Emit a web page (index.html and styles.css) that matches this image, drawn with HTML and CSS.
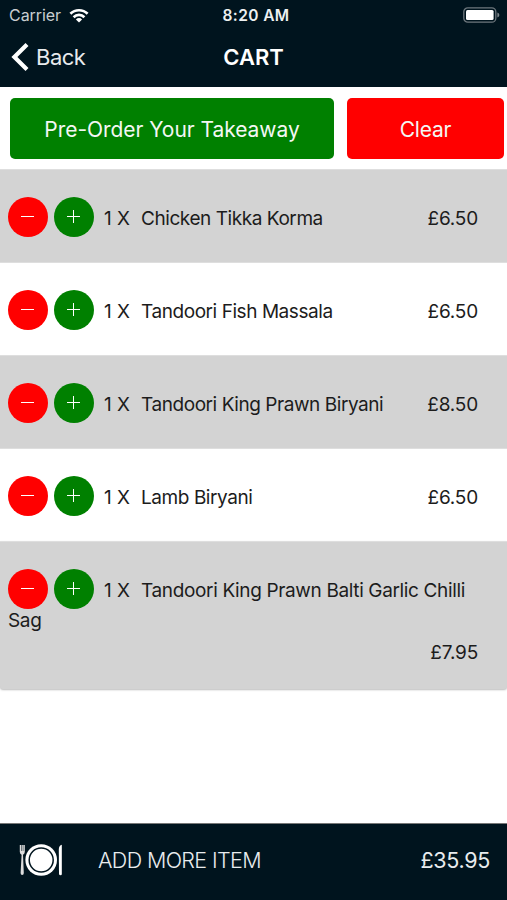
FILE: index.html
```html
<!DOCTYPE html>
<html lang="en">
<head>
    <meta charset="UTF-8">
    <title>Cart</title>
    <link rel="stylesheet" href="styles.css">
</head>
<body>
    <header class="header">
        <div class="status-bar">
            <div class="carrier">
                <span>Carrier</span>
                <svg class="wifi" viewBox="0 0 20 15" width="20" height="15">
                    <g fill="none" stroke="#fff" stroke-width="2.7">
                        <path d="M1.4 5.8A12.2 12.2 0 0 1 18.6 5.8"/>
                        <path d="M4.6 9.2A7.6 7.6 0 0 1 15.4 9.2"/>
                    </g>
                    <path d="M6.9 11.4A4.4 4.4 0 0 1 13.1 11.4L10 14.6Z" fill="#fff"/>
                </svg>
            </div>
            <div class="clock">8:20 AM</div>
            <svg class="battery" viewBox="0 0 37 16" width="37" height="16">
                <rect x="0.8" y="0.8" width="32" height="14.4" rx="4" fill="none" stroke="#6d777d" stroke-width="1.3"/>
                <rect x="3" y="3" width="27.6" height="10" rx="1.5" fill="#fff"/>
                <path d="M34.4 5.5Q36.4 6.2 36.4 8T34.4 10.5Z" fill="#7d868b"/>
            </svg>
        </div>
        <div class="nav-bar">
            <a class="back">
                <svg viewBox="0 0 18 28" width="18" height="28">
                    <path d="M16 1.6L3.4 14L16 26.4" fill="none" stroke="#fff" stroke-width="4.2"/>
                </svg>
                <span>Back</span>
            </a>
            <div class="title">CART</div>
        </div>
    </header>

    <div class="actions">
        <button class="btn btn-order">Pre-Order Your Takeaway</button>
        <button class="btn btn-clear">Clear</button>
    </div>

    <ul class="cart-list">
        <li class="cart-item">
            <div class="info"><button class="round minus"></button><button class="round plus"></button><span class="qty">1 X</span><span class="name">Chicken Tikka Korma</span></div>
            <div class="price">£6.50</div>
        </li>
        <li class="cart-item">
            <div class="info"><button class="round minus"></button><button class="round plus"></button><span class="qty">1 X</span><span class="name">Tandoori Fish Massala</span></div>
            <div class="price">£6.50</div>
        </li>
        <li class="cart-item">
            <div class="info"><button class="round minus"></button><button class="round plus"></button><span class="qty">1 X</span><span class="name">Tandoori King Prawn Biryani</span></div>
            <div class="price">£8.50</div>
        </li>
        <li class="cart-item">
            <div class="info"><button class="round minus"></button><button class="round plus"></button><span class="qty">1 X</span><span class="name">Lamb Biryani</span></div>
            <div class="price">£6.50</div>
        </li>
        <li class="cart-item">
            <div class="info"><button class="round minus"></button><button class="round plus"></button><span class="qty">1 X</span><span class="name">Tandoori King Prawn Balti Garlic Chilli Sag</span></div>
            <div class="price">£7.95</div>
        </li>
    </ul>

    <footer class="footer">
        <svg class="plate" viewBox="0 0 44 34" width="44" height="34">
            <path d="M0.8 2V9Q1 11 2.6 11.8L1.6 30Q1.6 32 3.2 32T4.8 30L4 11.8Q5.6 11 5.8 9V2" fill="#dcdcdc"/>
            <path d="M2.5 1V8M4.1 1V8" stroke="#00141e" stroke-width="0.5"/>
            <circle cx="22.2" cy="17" r="15.8" fill="#fff"/>
            <circle cx="22.2" cy="17" r="12" fill="none" stroke="#00141e" stroke-width="1.5"/>
            <path d="M42.8 1.8V31Q42.8 32.3 41.5 32.3T40 31L39.8 6Q40 2.5 42.8 1.8Z" fill="#fff"/>
        </svg>
        <span class="add-more">ADD MORE ITEM</span>
        <span class="total">£35.95</span>
    </footer>
</body>
</html>
```
FILE: styles.css
```css
* {
    box-sizing: border-box;
}
body {
    margin: 0;
    height: 900px;
    display: flex;
    flex-direction: column;
    background: #fff;
    font-family: Inter, "Liberation Sans", sans-serif;
    color: #1c1c1c;
    overflow: hidden;
}
button {
    border: none;
    padding: 0;
    font-family: inherit;
}

/* header */
.header {
    height: 87px;
    background: #00141e;
    color: #fff;
}
.status-bar {
    display: grid;
    grid-template-columns: 1fr auto 1fr;
    align-items: center;
    height: 30px;
    padding: 0 7px 0 9px;
}
.carrier {
    display: flex;
    align-items: center;
    gap: 8px;
    font-size: 16px;
    letter-spacing: -0.05px;
    color: #c9ced1;
}
.clock {
    font-size: 15.5px;
    font-weight: 600;
    letter-spacing: 0.4px;
    padding-left: 3px;
    color: #eef0f1;
}
.battery {
    justify-self: end;
}
.nav-bar {
    display: grid;
    grid-template-columns: 1fr auto 1fr;
    align-items: center;
    height: 54px;
    padding: 0 11px 0 11px;
}
.back {
    display: flex;
    align-items: center;
    gap: 7px;
    font-size: 22px;
    letter-spacing: -0.5px;
    color: #e8ebed;
}
.title {
    font-size: 22px;
    font-weight: 600;
}

/* top buttons */
.actions {
    display: flex;
    gap: 13px;
    height: 82px;
    padding: 11px 3px 10px 10px;
}
.btn {
    border-radius: 5px;
    padding-top: 2px;
    color: #f4f7f4;
    font-size: 21px;
}
.btn-order {
    width: 324px;
    background: #008000;
    letter-spacing: -0.05px;
}
.btn-clear {
    flex: 1;
    background: #f00;
    letter-spacing: -0.2px;
}

/* cart rows */
.cart-list {
    list-style: none;
    margin: 0;
    padding: 0;
}
.cart-item {
    display: flex;
    flex-wrap: wrap;
    align-items: baseline;
    justify-content: space-between;
    row-gap: 9px;
    min-height: 93px;
    padding: 27px 29px 25px 8px;
    border-top: 1px solid #dedede;
    font-size: 19px;
    line-height: 23px;
}
.cart-item:nth-child(odd) {
    background: #d3d3d3;
}
.round {
    position: relative;
    width: 40px;
    height: 40px;
    border-radius: 50%;
    vertical-align: -12px;
}
.minus {
    background: #f00;
    margin-right: 6px;
}
.plus {
    background: #008000;
    margin-right: 10px;
}
.round::before,
.plus::after {
    content: "";
    position: absolute;
    left: 13px;
    top: 19px;
    width: 13px;
    height: 1px;
    background: #fff;
}
.plus::after {
    transform: rotate(90deg);
}
.qty {
    margin-right: 11px;
}
.name {
    letter-spacing: -0.44px;
}
.price {
    margin-left: auto;
    letter-spacing: -0.2px;
}
.cart-item:last-child {
    padding-bottom: 25px;
    border-radius: 0 0 3px 3px;
    box-shadow: 0 1px 2px #bbb;
}
.cart-item:last-child .name {
    letter-spacing: -0.36px;
}

/* bottom bar */
.footer {
    display: flex;
    align-items: center;
    height: 77px;
    margin-top: auto;
    padding: 0 17px 4px 19px;
    background: #00141e;
    border-top: 1px solid #777;
    color: #e9ecee;
}
.add-more {
    margin-left: 35px;
    font-size: 21.5px;
    font-weight: 300;
    letter-spacing: -0.63px;
}
.total {
    margin-left: auto;
    font-size: 21.5px;
    letter-spacing: -0.3px;
}
```
